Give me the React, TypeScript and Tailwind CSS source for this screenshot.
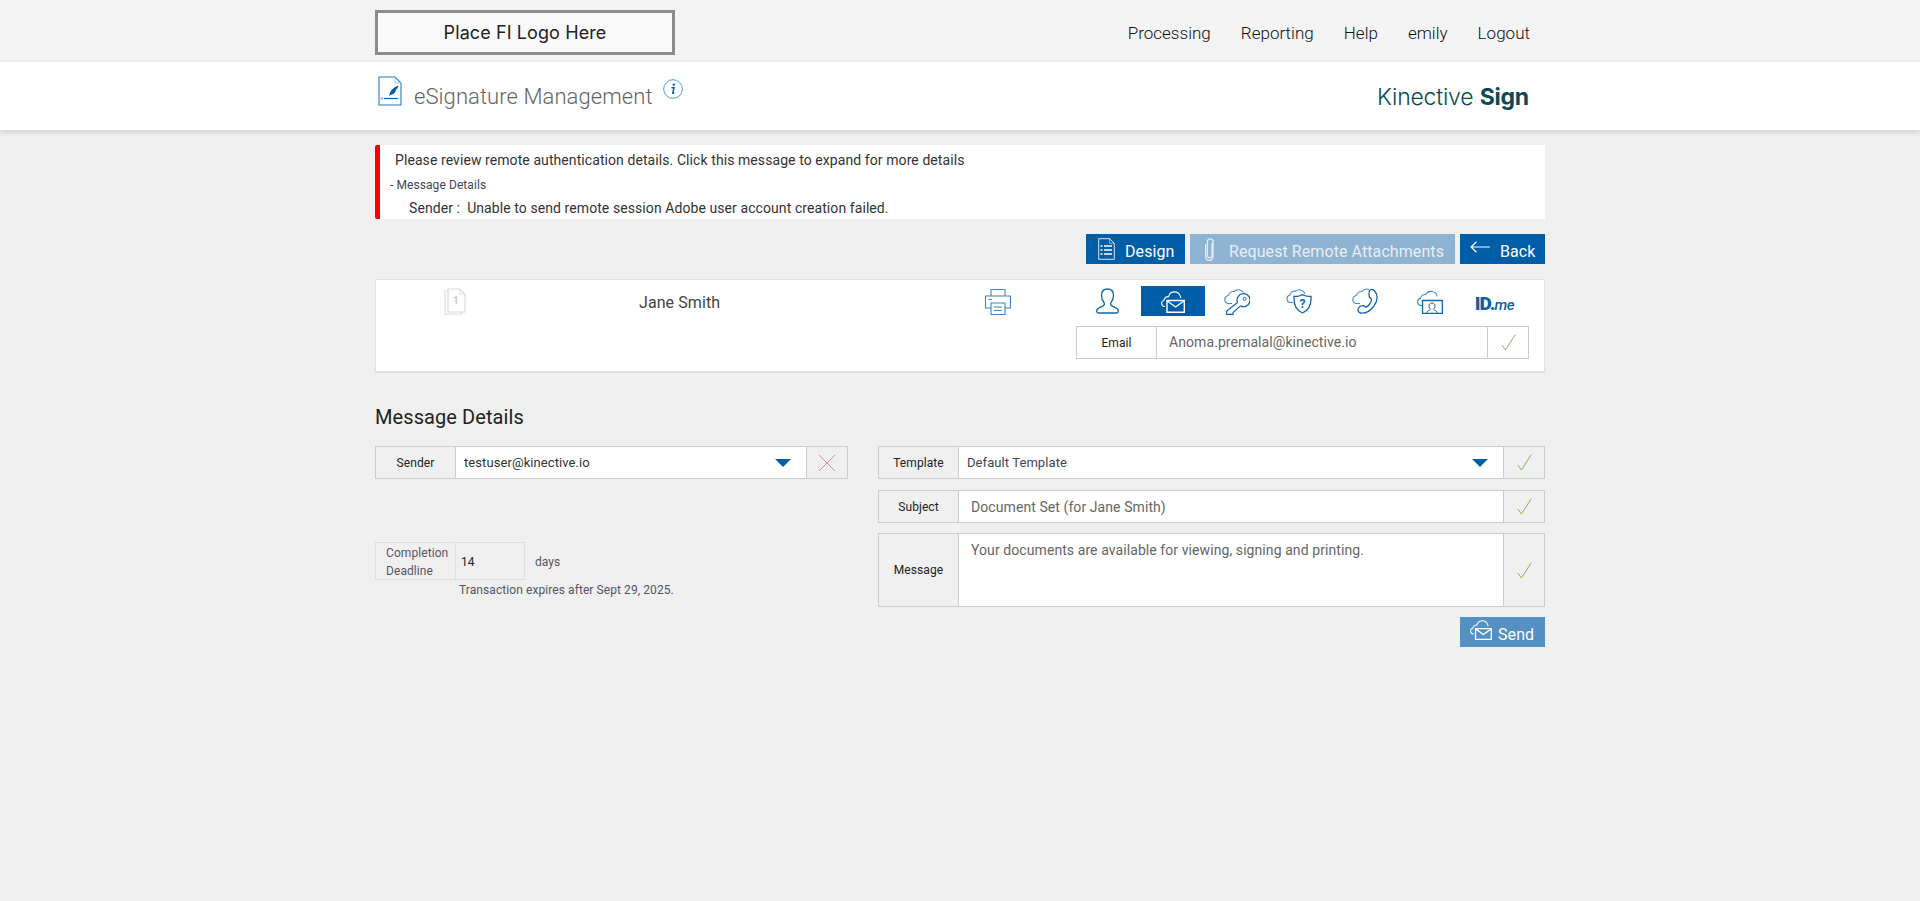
import type { ReactNode } from 'react';

const BLUE = '#005ea8';
const CLOUD = '#3f8ac6';

const navItems = ['Processing', 'Reporting', 'Help', 'emily', 'Logout'];

const DocSignIcon = () => (
  <svg width="24" height="30" viewBox="0 0 24 30" fill="none">
    <path d="M1 1h16l6 6v22H1z" stroke="#2b79bd" strokeWidth="1.100" />
    <path d="M17 1v6h6" stroke="#9cc2e0" strokeWidth="1" />
    <path d="M11 20c.6-4.500 4-8.500 9.500-10.500-.5 2.300-1.500 3.500-2.500 4.300l-.7 2.500c-1.500 1.600-3.300 2.500-5.300 2.700l-1 1.500z" fill={BLUE} />
    <path d="M6 22.500h14" stroke={BLUE} strokeWidth="1.200" />
    <path d="M3 21.500l2 2m0-2l-2 2" stroke={BLUE} strokeWidth="0.700" />
  </svg>
);

const InfoIcon = () => (
  <svg width="20" height="20" viewBox="0 0 20 20" fill="none">
    <circle cx="10" cy="10" r="9.300" stroke="#4f9ad0" strokeWidth="1" />
    <circle cx="10.800" cy="5.600" r="1.200" fill={BLUE} />
    <path d="M8.500 8.700h2.600l-1.400 5.200c-.1.600.5.600 1.600-.3" stroke={BLUE} strokeWidth="1.400" />
  </svg>
);

const DesignIcon = () => (
  <svg width="17" height="22" viewBox="0 0 17 22" fill="none" stroke="#fff">
    <path d="M.7.700h11l4.600 4.600v16H.7z" strokeWidth="1" opacity=".85" />
    <path d="M11.700.700v4.600h4.600" strokeWidth=".8" opacity=".7" />
    <path d="M6 8h8M6 12h8M6 16h8M2.500 8h2M2.500 12h2M2.500 16h2" strokeWidth="1.300" />
  </svg>
);

const ClipIcon = () => (
  <svg width="10" height="23" viewBox="0 0 10 23" fill="none" stroke="#e3edf5" strokeWidth="1.300">
    <path d="M7 5.500v12a2.300 2.300 0 0 1-4.600 0V3.600a2.800 2.800 0 0 1 5.600 0v14.600c0 6-7.400 5.500-7.400 0V6" />
  </svg>
);

const BackArrow = () => (
  <svg width="20" height="12" viewBox="0 0 20 12" fill="none" stroke="#fff" strokeWidth="1.200">
    <path d="M20 6H1M6.500.800L1 6l5.500 5.200" />
  </svg>
);

const PagesIcon = () => (
  <svg width="22" height="27" viewBox="0 0 22 27" fill="none" stroke="#dcdcdc" strokeWidth="1.200">
    <path d="M4 1h12l5 5v18H4z" />
    <path d="M16 1v5h5" strokeWidth=".8" />
    <path d="M4 3H1v23h17v-2" />
    <text x="12" y="16" fontSize="10" fontWeight="700" fill="#cccccc" stroke="none" textAnchor="middle" fontFamily="Roboto, sans-serif">1</text>
  </svg>
);

const PrinterIcon = () => (
  <svg width="28" height="28" viewBox="0 0 28 28" fill="none" stroke="#3d86c4" strokeWidth="1.100">
    <path d="M7 8V1.500h14V8" />
    <path d="M7 20H1.500V8h25v12H21" />
    <path d="M7 15h14v11.500H7z" />
    <path d="M10 19h8M10 22.500h8" />
    <path d="M4.500 11.500h3" />
  </svg>
);

const PersonIcon = () => (
  <svg width="23" height="26" viewBox="0 0 23 26" fill="none" stroke="#0f67ae" strokeWidth="1.300">
    <path d="M11.500 1c-4 0-6 2.600-6 6.300 0 3 1 5.600 2.500 7.200.7 1.500.2 3-1.500 3.800-2.500 1.200-5.500 2-5.800 4.300-.1 1.300.4 2.400 1.400 2.400h18.800c1 0 1.500-1.100 1.400-2.400-.3-2.300-3.300-3.100-5.800-4.300-1.700-.8-2.200-2.300-1.500-3.800 1.500-1.600 2.500-4.200 2.500-7.200 0-3.700-2-6.300-6-6.300z" />
  </svg>
);

const MailCloudIcon = ({ size = 24 }: { size?: number }) => (
  <svg width={size} height={size - 1} viewBox="0 0 24 23" fill="none" stroke="#fff">
    <path d="M4 16.500H3.500a3.200 3.200 0 0 1-.5-6.300 4 4 0 0 1 4.600-3.500A6 6 0 0 1 19 5.500c.5.900.7 1.500.8 2.500" strokeWidth="1.100" />
    <path d="M6 10.500h17.300v11.800H6z" strokeWidth="1.400" />
    <path d="M6 10.800l8.600 6.200 8.600-6.200" strokeWidth="1.400" />
  </svg>
);

const KeyCloudIcon = () => (
  <svg width="26" height="27" viewBox="0 0 26 27" fill="none">
    <path d="M8 15.500H5a4 4 0 0 1-.5-8A5 5 0 0 1 10 3.500a6.200 6.200 0 0 1 9.500 1" stroke={CLOUD} strokeWidth="1.100" />
    <path d="M13.500 14.500a6.500 6.500 0 1 1 3 3.400" stroke="#0f67ae" strokeWidth="1.300" />
    <circle cx="20.500" cy="10.800" r="1.500" stroke="#0f67ae" strokeWidth="1" />
    <path d="M16.500 17.900l-7.500 6.600v1.800H6.800v-.2L5 26.300H2.500v-3l11-8.800" stroke="#0f67ae" strokeWidth="1.200" />
  </svg>
);

const ShieldCloudIcon = () => (
  <svg width="26" height="25" viewBox="0 0 26 25" fill="none">
    <path d="M7 13.500H4.500a3.800 3.800 0 0 1-.5-7.500 4.800 4.800 0 0 1 5.500-3.800 6 6 0 0 1 9.500 2.500" stroke={CLOUD} strokeWidth="1.100" />
    <path d="M16.500 5.500c2 1.500 5 2 8.500 2 .4 7.500-1.500 13.500-8.500 16.500-7-3-8.900-9-8.500-16.500 3.500 0 6.500-.5 8.500-2z" stroke="#0f67ae" strokeWidth="1.300" />
    <text x="16.500" y="18.500" fontSize="12" fontWeight="700" fill="#0f67ae" textAnchor="middle" fontFamily="Roboto, sans-serif">?</text>
  </svg>
);

const PhoneCloudIcon = () => (
  <svg width="26" height="26" viewBox="0 0 26 26" fill="none">
    <path d="M8 15.500H5a4 4 0 0 1-.5-8A5 5 0 0 1 10 3.500a6 6 0 0 1 7-2" stroke={CLOUD} strokeWidth="1.100" />
    <path d="M18 2c1.500-1 3.500-.5 5 1.500 3 4 2.500 9.500-1 14.500-3.500 4.500-8.500 8-13.500 7-2.500-.5-3-3-2-5 1-1.500 3.500-2.800 5.200-2.300.8.300 1 1.500 2.300 1.300 2.500-.5 5.500-5 5.500-7.500 0-1.200-2-1.500-2.200-2.500-.2-1.500-.7-6 .7-7z" stroke="#0f67ae" strokeWidth="1.300" />
  </svg>
);

const VideoCloudIcon = () => (
  <svg width="26" height="25" viewBox="0 0 26 25" fill="none">
    <path d="M5 16.500H4a3.600 3.600 0 0 1-.5-7.100 4.500 4.500 0 0 1 5.200-3.900 6.200 6.200 0 0 1 11.500 2" stroke={CLOUD} strokeWidth="1.100" />
    <path d="M5.500 11.500h19.800v12.800H5.500z" stroke="#0f67ae" strokeWidth="1.300" />
    <path d="M9.500 24c.3-2.500 3.600-2.500 4-3.700-1-1-1.500-2-1.500-3.300 0-1.800 1-3 3-3s3 1.200 3 3c0 1.300-.5 2.300-1.500 3.300.4 1.200 3.700 1.200 4 3.700" stroke="#0f67ae" strokeWidth="1" />
  </svg>
);

const Check = () => (
  <svg width="15" height="17" viewBox="0 0 15 17" fill="none" stroke="#8ab060" strokeWidth="1">
    <path d="M.8 11l3.600 5L14.300.6" />
  </svg>
);

const Caret = () => <div className="w-0 h-0 border-x-[8px] border-x-transparent border-t-[8px] border-t-[#005ea8]" />;

const Label = ({ children }: { children: ReactNode }) => (
  <div className="w-[80px] shrink-0 flex items-center justify-center border-r border-[#cccccc] text-[12px] text-[#222222]">
    {children}
  </div>
);

const ConfirmCell = () => (
  <div className="w-[41px] shrink-0 flex items-center justify-center border-l border-[#cccccc]">
    <Check />
  </div>
);

const tabs = [
  { key: 'person', icon: <PersonIcon /> },
  { key: 'mail', icon: <MailCloudIcon />, active: true },
  { key: 'key', icon: <div className="-ml-[2px]"><KeyCloudIcon /></div> },
  { key: 'shield', icon: <div className="-ml-[7px]"><ShieldCloudIcon /></div> },
  { key: 'phone', icon: <div className="-ml-[4px]"><PhoneCloudIcon /></div> },
  { key: 'video', icon: <div className="-ml-[4px]"><VideoCloudIcon /></div> },
  {
    key: 'idme',
    icon: (
      <span className="mt-[5px] -ml-[5px] text-[19px] leading-none font-black tracking-[-1px] text-[#0f5fa3]">
        ID.<span className="italic font-medium text-[15px] tracking-[-0.3px]">me</span>
      </span>
    ),
  },
];

const App = () => {
  return (
    <div className="min-h-[901px] bg-[#f0f0f0] font-['Roboto',sans-serif] tracking-[0.08px]">
      <header className="h-[62px] bg-[#f4f4f4]">
        <div className="w-[1170px] mx-auto flex items-start justify-between">
          <div className="mt-[10px] w-[300px] h-[45px] border-[3px] border-[#8c8c8c] bg-[#fafafa] flex items-center justify-center font-['Inter',sans-serif] text-[18px] tracking-[0.1px] text-[#222222]">
            Place FI Logo Here
          </div>
          <nav className="flex gap-[30px] pr-[15px] pt-[23px] text-[17px] leading-[20px] font-light tracking-[0.02px] text-[#111111]">
            {navItems.map((item) => (
              <a key={item}>{item}</a>
            ))}
          </nav>
        </div>
      </header>

      <div className="h-[68px] bg-white shadow-[0_2px_6px_rgba(0,0,0,0.15)]">
        <div className="w-[1170px] mx-auto flex items-start justify-between">
          <div className="flex items-start pl-[3px] pt-[14px]">
            <DocSignIcon />
            <span className="ml-[12px] mt-[6px] text-[22px] leading-[30px] font-light text-[#666666]">eSignature Management</span>
            <span className="ml-[10px] mt-[3px]"><InfoIcon /></span>
          </div>
          <div className="pr-[16px] pt-[20px] text-[23px] leading-[30px] font-light tracking-[-0.2px] text-[#0b4a52] font-['Inter',sans-serif]">
            Kinective <span className="font-bold">Sign</span>
          </div>
        </div>
      </div>

      <main className="w-[1170px] mx-auto pt-[15px]">
        <div className="h-[74px] bg-white border-l-[5px] border-[#ff0000] rounded-l-[2px] text-[#333333]">
          <div className="pl-[15px] pt-[5px] text-[14px] leading-[20px]">Please review remote authentication details. Click this message to expand for more details</div>
          <div className="pl-[10px] pt-[7px] text-[12px] leading-[16px] text-[#445]">- Message Details</div>
          <div className="pl-[29px] pt-[5px] text-[14px] leading-[20px]">Sender :&nbsp; Unable to send remote session Adobe user account creation failed.</div>
        </div>

        <div className="mt-[15px] flex justify-end gap-[5px] text-[16px] text-white">
          <button className="w-[99px] h-[30px] bg-[#005ea8] flex items-center pl-[12px] gap-[10px]">
            <DesignIcon />
            <span className="pt-[5px]">Design</span>
          </button>
          <button className="w-[265px] h-[30px] bg-[#8fb3d3] flex items-center pl-[15px] gap-[14px] text-[#e8eff6]">
            <ClipIcon />
            <span className="pt-[5px]">Request Remote Attachments</span>
          </button>
          <button className="w-[85px] h-[30px] bg-[#005ea8] flex items-center pl-[10px] gap-[10px]">
            <span className="-mt-[4px]"><BackArrow /></span>
            <span className="pt-[5px]">Back</span>
          </button>
        </div>

        <section className="mt-[15px] h-[93px] bg-white border border-[#e2e2e2] flex justify-between shadow-[0_1px_1px_rgba(0,0,0,0.06)]">
          <div className="flex items-start">
            <div className="ml-[68px] mt-[8px]"><PagesIcon /></div>
            <div className="ml-[173px] mt-[13px] text-[16px] leading-[20px] text-[#444444]">Jane Smith</div>
            <div className="ml-[264px] mt-[8px]"><PrinterIcon /></div>
          </div>
          <div className="w-[453px] mr-[15px] pt-[6px]">
            <div className="flex gap-px">
              {tabs.map((tab) => (
                <div key={tab.key} className={`w-[64px] h-[30px] flex items-center justify-center ${tab.active ? 'bg-[#005ea8]' : ''}`}>
                  {tab.icon}
                </div>
              ))}
            </div>
            <div className="mt-[10px] h-[33px] flex border border-[#cccccc]">
              <Label>Email</Label>
              <div className="flex-1 flex items-center pl-[12px] text-[14px] text-[#666666]">Anoma.premalal@kinective.io</div>
              <ConfirmCell />
            </div>
          </div>
        </section>

        <h2 className="mt-[33px] text-[20px] leading-[24px] text-[#222222]">Message Details</h2>

        <div className="mt-[17px] flex justify-between items-start">
          <div className="w-[473px]">
            <div className="h-[33px] flex border border-[#cccccc]">
              <Label>Sender</Label>
              <div className="flex-1 bg-white flex items-center justify-between pl-[8px] pr-[15px] text-[13px] text-[#333333]">
                testuser@kinective.io
                <Caret />
              </div>
              <div className="w-[41px] shrink-0 flex items-center justify-center border-l border-[#cccccc]">
                <svg width="18" height="18" viewBox="0 0 18 18" stroke="#e08a96" strokeWidth="1" fill="none">
                  <path d="M1 1l16 16M17 1L1 17" />
                </svg>
              </div>
            </div>

            <div className="mt-[63px] flex items-center">
              <div className="h-[38px] flex border border-[#e0e0e0]">
                <div className="w-[80px] border-r border-[#e0e0e0] pl-[10px] pt-px text-[12px] leading-[18px] text-[#555566]">Completion Deadline</div>
                <div className="w-[68px] flex items-center pl-[5px] pt-px text-[12px] text-[#222222]">14</div>
              </div>
              <span className="ml-[10px] pt-px text-[12px] text-[#555566]">days</span>
            </div>
            <div className="pl-[84px] pt-[2px] text-[12px] leading-[16px] text-[#555566]">Transaction expires after Sept 29, 2025.</div>
          </div>

          <div className="w-[667px]">
            <div className="h-[33px] flex border border-[#cccccc]">
              <Label>Template</Label>
              <div className="flex-1 bg-white flex items-center justify-between pl-[8px] pr-[15px] text-[13px] text-[#444455]">
                Default Template
                <Caret />
              </div>
              <ConfirmCell />
            </div>
            <div className="mt-[11px] h-[33px] flex border border-[#cccccc]">
              <Label>Subject</Label>
              <div className="flex-1 bg-white flex items-center pl-[12px] pt-px text-[14px] text-[#666666]">Document Set (for Jane Smith)</div>
              <ConfirmCell />
            </div>
            <div className="mt-[10px] h-[74px] flex border border-[#cccccc]">
              <Label>Message</Label>
              <div className="flex-1 bg-white pl-[12px] pt-[8px] text-[14px] leading-[16px] text-[#666666]">Your documents are available for viewing, signing and printing.</div>
              <ConfirmCell />
            </div>
            <div className="mt-[10px] flex justify-end">
              <button className="w-[85px] h-[30px] bg-[#5490c2] flex items-center pl-[10px] gap-[6px] text-[16px] text-white">
                <span className="-mt-[5px]"><MailCloudIcon size={22} /></span>
                <span className="pt-[5px]">Send</span>
              </button>
            </div>
          </div>
        </div>
      </main>
    </div>
  );
};

export default App;
